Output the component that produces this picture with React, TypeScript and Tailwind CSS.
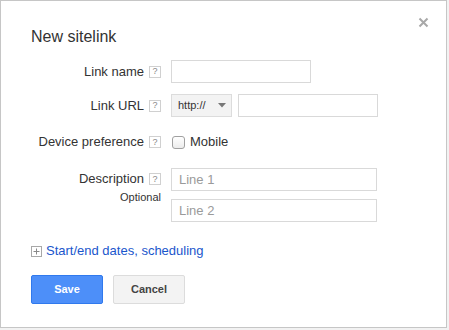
import React from "react";

const font = { fontFamily: '"Liberation Sans", Arial, sans-serif' };

function Help() {
  return (
    <span className="ml-[5px] inline-flex h-[12px] w-[12px] items-center justify-center border border-[#d0d0d0] bg-white text-[9px] leading-none text-[#888]">
      ?
    </span>
  );
}

function Label({ children }: { children: React.ReactNode }) {
  return (
    <div className="flex w-[130px] shrink-0 items-center justify-end text-[13px] text-[#333]">
      <span>{children}</span>
      <Help />
    </div>
  );
}

export default function App() {
  return (
    <div className="h-[330px] w-[449px] bg-[#f2f2f2]" style={font}>
      <div className="relative h-[328px] w-[447px] border border-[#c6c6c6] bg-white pl-[30px]">
        {/* close */}
        <svg className="absolute left-[417px] top-[16px]" width="11" height="11" viewBox="0 0 11 11">
          <path d="M1.5 1.5 L9.5 9.5 M9.5 1.5 L1.5 9.5" stroke="#a8a8a8" strokeWidth="2" />
        </svg>

        <h1 className="pt-[26px] text-[16px] leading-[20px] text-[#333]">New sitelink</h1>

        <div className="mt-[13px] flex flex-col">
          {/* Link name */}
          <div className="flex h-[23px] items-center">
            <Label>Link name</Label>
            <input className="ml-[10px] h-[23px] w-[140px] border border-[#d9d9d9] px-2 text-[13px] outline-none" />
          </div>

          {/* Link URL */}
          <div className="mt-[11px] flex h-[23px] items-center">
            <Label>Link URL</Label>
            <div className="ml-[10px] flex h-[23px] w-[61px] items-center border border-[#dcdcdc] bg-[#f3f3f3] pl-[6px] text-[11px] text-[#333]">
              <span>http://</span>
              <svg className="ml-[12px]" width="8" height="5" viewBox="0 0 8 5">
                <path d="M0 0 L8 0 L4 4.5 Z" fill="#777" />
              </svg>
            </div>
            <input className="ml-[6px] h-[23px] w-[140px] border border-[#d9d9d9] px-2 text-[13px] outline-none" />
          </div>

          {/* Device preference */}
          <div className="mt-[15px] flex h-[20px] items-center">
            <Label>Device preference</Label>
            <span className="ml-[11px] h-[13px] w-[13px] rounded-[3px] border border-[#a0a0a0] bg-gradient-to-b from-white to-[#ececec]" />
            <span className="ml-[5px] text-[13px] text-[#333]">Mobile</span>
          </div>

          {/* Description */}
          <div className="mt-[16px] flex">
            <div className="flex w-[130px] shrink-0 flex-col items-end">
              <div className="flex h-[22px] items-center text-[13px] text-[#333]">
                <span>Description</span>
                <Help />
              </div>
              <span className="text-[11px] leading-[14px] text-[#333]">Optional</span>
            </div>
            <div className="ml-[10px] flex flex-col gap-[8px]">
              <input
                placeholder="Line 1"
                className="h-[23px] w-[206px] border border-[#d9d9d9] px-[7px] text-[13px] outline-none placeholder:text-[#9a9a9a]"
              />
              <input
                placeholder="Line 2"
                className="h-[23px] w-[206px] border border-[#d9d9d9] px-[7px] text-[13px] outline-none placeholder:text-[#9a9a9a]"
              />
            </div>
          </div>

          {/* Scheduling */}
          <div className="mt-[21px] flex h-[16px] items-center">
            <svg width="11" height="11" viewBox="0 0 11 11">
              <rect x="0.5" y="0.5" width="10" height="10" fill="white" stroke="#a8a8a8" />
              <path d="M2.5 5.5 H8.5 M5.5 2.5 V8.5" stroke="#888" />
            </svg>
            <span className="ml-[4px] text-[13px] text-[#1a56cc]">Start/end dates, scheduling</span>
          </div>

          {/* Buttons */}
          <div className="mt-[16px] flex gap-[10px]">
            <button className="h-[29px] w-[72px] rounded-[2px] border border-[#3079ed] bg-[#4d8ff9] text-[11px] font-bold text-white">
              Save
            </button>
            <button className="h-[29px] w-[72px] rounded-[2px] border border-[#dcdcdc] bg-[#f3f3f3] text-[11px] font-bold text-[#444]">
              Cancel
            </button>
          </div>
        </div>
      </div>
    </div>
  );
}
